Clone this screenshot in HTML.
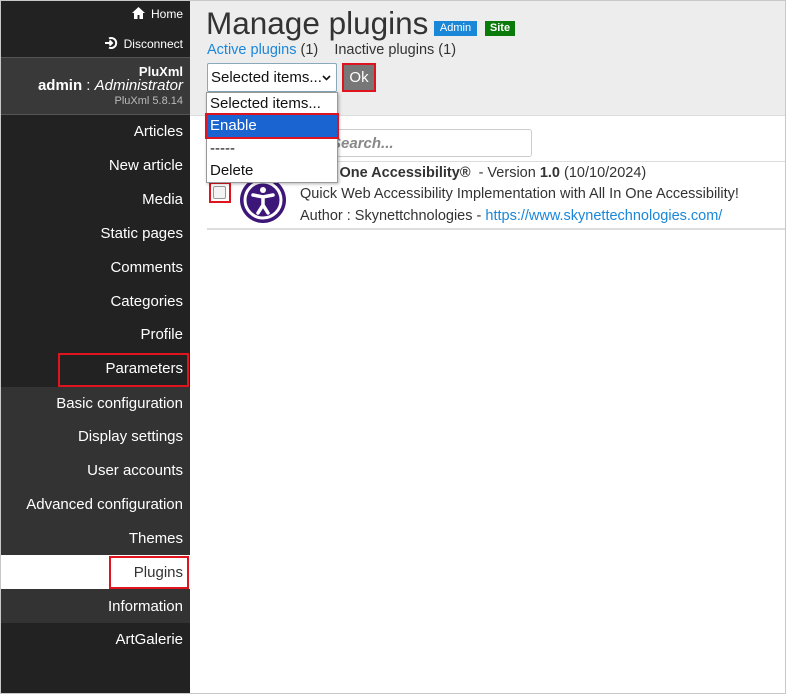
<!DOCTYPE html>
<html><head><meta charset="utf-8"><style>
*{box-sizing:border-box;margin:0;padding:0}
body{width:786px;height:694px;overflow:hidden;font-family:"Liberation Sans",Arial,sans-serif;background:#fff;position:relative}
.frame{position:absolute;left:0;top:0;width:786px;height:694px;border:1px solid #c8c8c8;pointer-events:none;z-index:10}
.side{position:absolute;left:0;top:0;width:190px;height:694px;background:#222;color:#fff}
.abs{position:absolute}
.r{position:absolute;right:7px;font-size:15px;color:#fff}
.hdr{position:absolute;left:190px;top:0;width:596px;height:116px;background:#ededed;border-bottom:1px solid #ddd}
.red{position:absolute;border:2px solid #e0141e}
.t{font-size:14.5px;color:#333}
</style></head><body>
<div class="side">
  <div class="abs" style="right:7px;top:7px;font-size:12px">
    <svg width="13" height="12" viewBox="0 0 13 12" style="vertical-align:-1px;margin-right:6px"><path d="M6.5 0L0 6h2v6h3.5V8h2v4H11V6h2z" fill="#fff"/></svg>Home</div>
  <div class="abs" style="right:7px;top:36px;font-size:12px">
    <svg width="14" height="14" viewBox="0 0 14 14" style="vertical-align:-2px;margin-right:6px"><path d="M5 2.5A5 5 0 1 1 5 11.5" stroke="#fff" stroke-width="2" fill="none"/><path d="M1 7h7M5.5 4.5L8 7 5.5 9.5" stroke="#fff" stroke-width="2" fill="none"/></svg>Disconnect</div>
  <div class="abs" style="left:0;top:57px;width:190px;height:58px;background:#393939;border-top:1px solid #555;border-bottom:1px solid #555"></div>
  <div class="abs" style="right:7px;top:64px;font-size:13px;font-weight:bold;text-align:right">PluXml</div>
  <div class="abs" style="right:7px;top:77px;font-size:15px;text-align:right"><b>admin</b> : <i>Administrator</i></div>
  <div class="abs" style="right:7px;top:95px;font-size:11px;color:#bbb">PluXml 5.8.14</div>
  <div class="abs" style="left:0;top:387px;width:190px;height:168px;background:#333"></div>
  <div class="abs" style="left:0;top:555px;width:190px;height:34px;background:#fff"></div>
  <div class="abs" style="left:0;top:589px;width:190px;height:34px;background:#333"></div>
  <div class="r" style="top:123px">Articles</div>
  <div class="r" style="top:157px">New article</div>
  <div class="r" style="top:191px">Media</div>
  <div class="r" style="top:225px">Static pages</div>
  <div class="r" style="top:259px">Comments</div>
  <div class="r" style="top:293px">Categories</div>
  <div class="r" style="top:326px">Profile</div>
  <div class="r" style="top:360px">Parameters</div>
  <div class="r" style="top:395px">Basic configuration</div>
  <div class="r" style="top:428px">Display settings</div>
  <div class="r" style="top:462px">User accounts</div>
  <div class="r" style="top:496px">Advanced configuration</div>
  <div class="r" style="top:530px">Themes</div>
  <div class="r" style="top:564px;color:#333">Plugins</div>
  <div class="r" style="top:598px">Information</div>
  <div class="r" style="top:631px">ArtGalerie</div>
  <div class="red" style="left:58px;top:353px;width:131px;height:34px"></div>
  <div class="red" style="left:109px;top:556px;width:80px;height:33px"></div>
</div>
<div class="hdr"></div>
<div class="abs" style="left:206px;top:5px;font-size:31.5px;color:#333">Manage plugins</div>
<div class="abs" style="left:434px;top:21px;width:43px;height:15px;background:#1a87d9;color:#fff;font-size:11px;text-align:center;line-height:15px">Admin</div>
<div class="abs" style="left:485px;top:21px;width:30px;height:15px;background:#0a7a0a;color:#fff;font-size:11px;text-align:center;line-height:15px;font-weight:bold">Site</div>
<div class="abs t" style="left:207px;top:42px"><span style="color:#1a87d9">Active plugins</span> (1)&nbsp;&nbsp;&nbsp; Inactive plugins (1)</div>
<div class="abs" style="left:207px;top:63px;width:130px;height:29px;background:#fff;border:1px solid #8ab;border-radius:2px;font-size:15px;color:#111;padding:5px 3px">Selected items...<svg style="position:absolute;right:5px;top:11px" width="9" height="6" viewBox="0 0 9 6"><path d="M1 1l3.5 3.5L8 1" stroke="#111" stroke-width="1.6" fill="none"/></svg></div>
<div class="abs" style="left:342px;top:63px;width:34px;height:29px;background:#777;color:#fff;font-size:15px;text-align:center;line-height:25px;border:2px solid #e0141e">Ok</div>
<div class="abs" style="left:300px;top:129px;width:232px;height:28px;border:1px solid #ccc;border-radius:3px;font-size:15px;color:#888;font-style:italic;font-weight:bold;padding:5px 30px">Search...</div>
<div class="abs" style="left:207px;top:161px;width:579px;height:1px;background:#ddd"></div>
<div class="abs" style="left:207px;top:228px;width:579px;height:2px;background:#ddd"></div>
<svg class="abs" style="left:239px;top:176px" width="48" height="48" viewBox="0 0 48 48"><circle cx="24" cy="24" r="23" fill="#3d1679"/><circle cx="24" cy="24" r="18" fill="none" stroke="#fff" stroke-width="3"/><circle cx="24" cy="14" r="3" fill="#fff"/><path d="M14 19l10 2 10-2M24 21v8l-5 8M24 29l5 8" stroke="#fff" stroke-width="3.5" fill="none" stroke-linecap="round"/></svg>
<div class="abs" style="left:213px;top:186px;width:13px;height:13px;border:1px solid #999;border-radius:2px;background:#f4f4f4"></div>
<div class="red" style="left:209px;top:182px;width:22px;height:21px"></div>
<div class="abs t" style="left:300px;top:165px"><b>All In One Accessibility®</b>&nbsp; - Version <b>1.0</b> (10/10/2024)</div>
<div class="abs t" style="left:300px;top:186px">Quick Web Accessibility Implementation with All In One Accessibility!</div>
<div class="abs t" style="left:300px;top:208px">Author : Skynettchnologies - <span style="color:#1a87d9">https://www.skynettechnologies.com/</span></div>
<div class="abs" style="left:206px;top:92px;width:132px;height:91px;background:#fff;border:1px solid #999;box-shadow:1px 1px 3px rgba(0,0,0,.3);font-size:15px;color:#111">
  <div style="padding:2px 3px;height:22px">Selected items...</div>
  <div style="padding:2px 3px;height:23px;background:#1a64d2;color:#fff">Enable</div>
  <div style="padding:2px 3px;height:22px">-----</div>
  <div style="padding:2px 3px;height:22px">Delete</div>
</div>
<div class="red" style="left:205px;top:113px;width:134px;height:26px"></div>
<div class="frame"></div>
</body></html>
